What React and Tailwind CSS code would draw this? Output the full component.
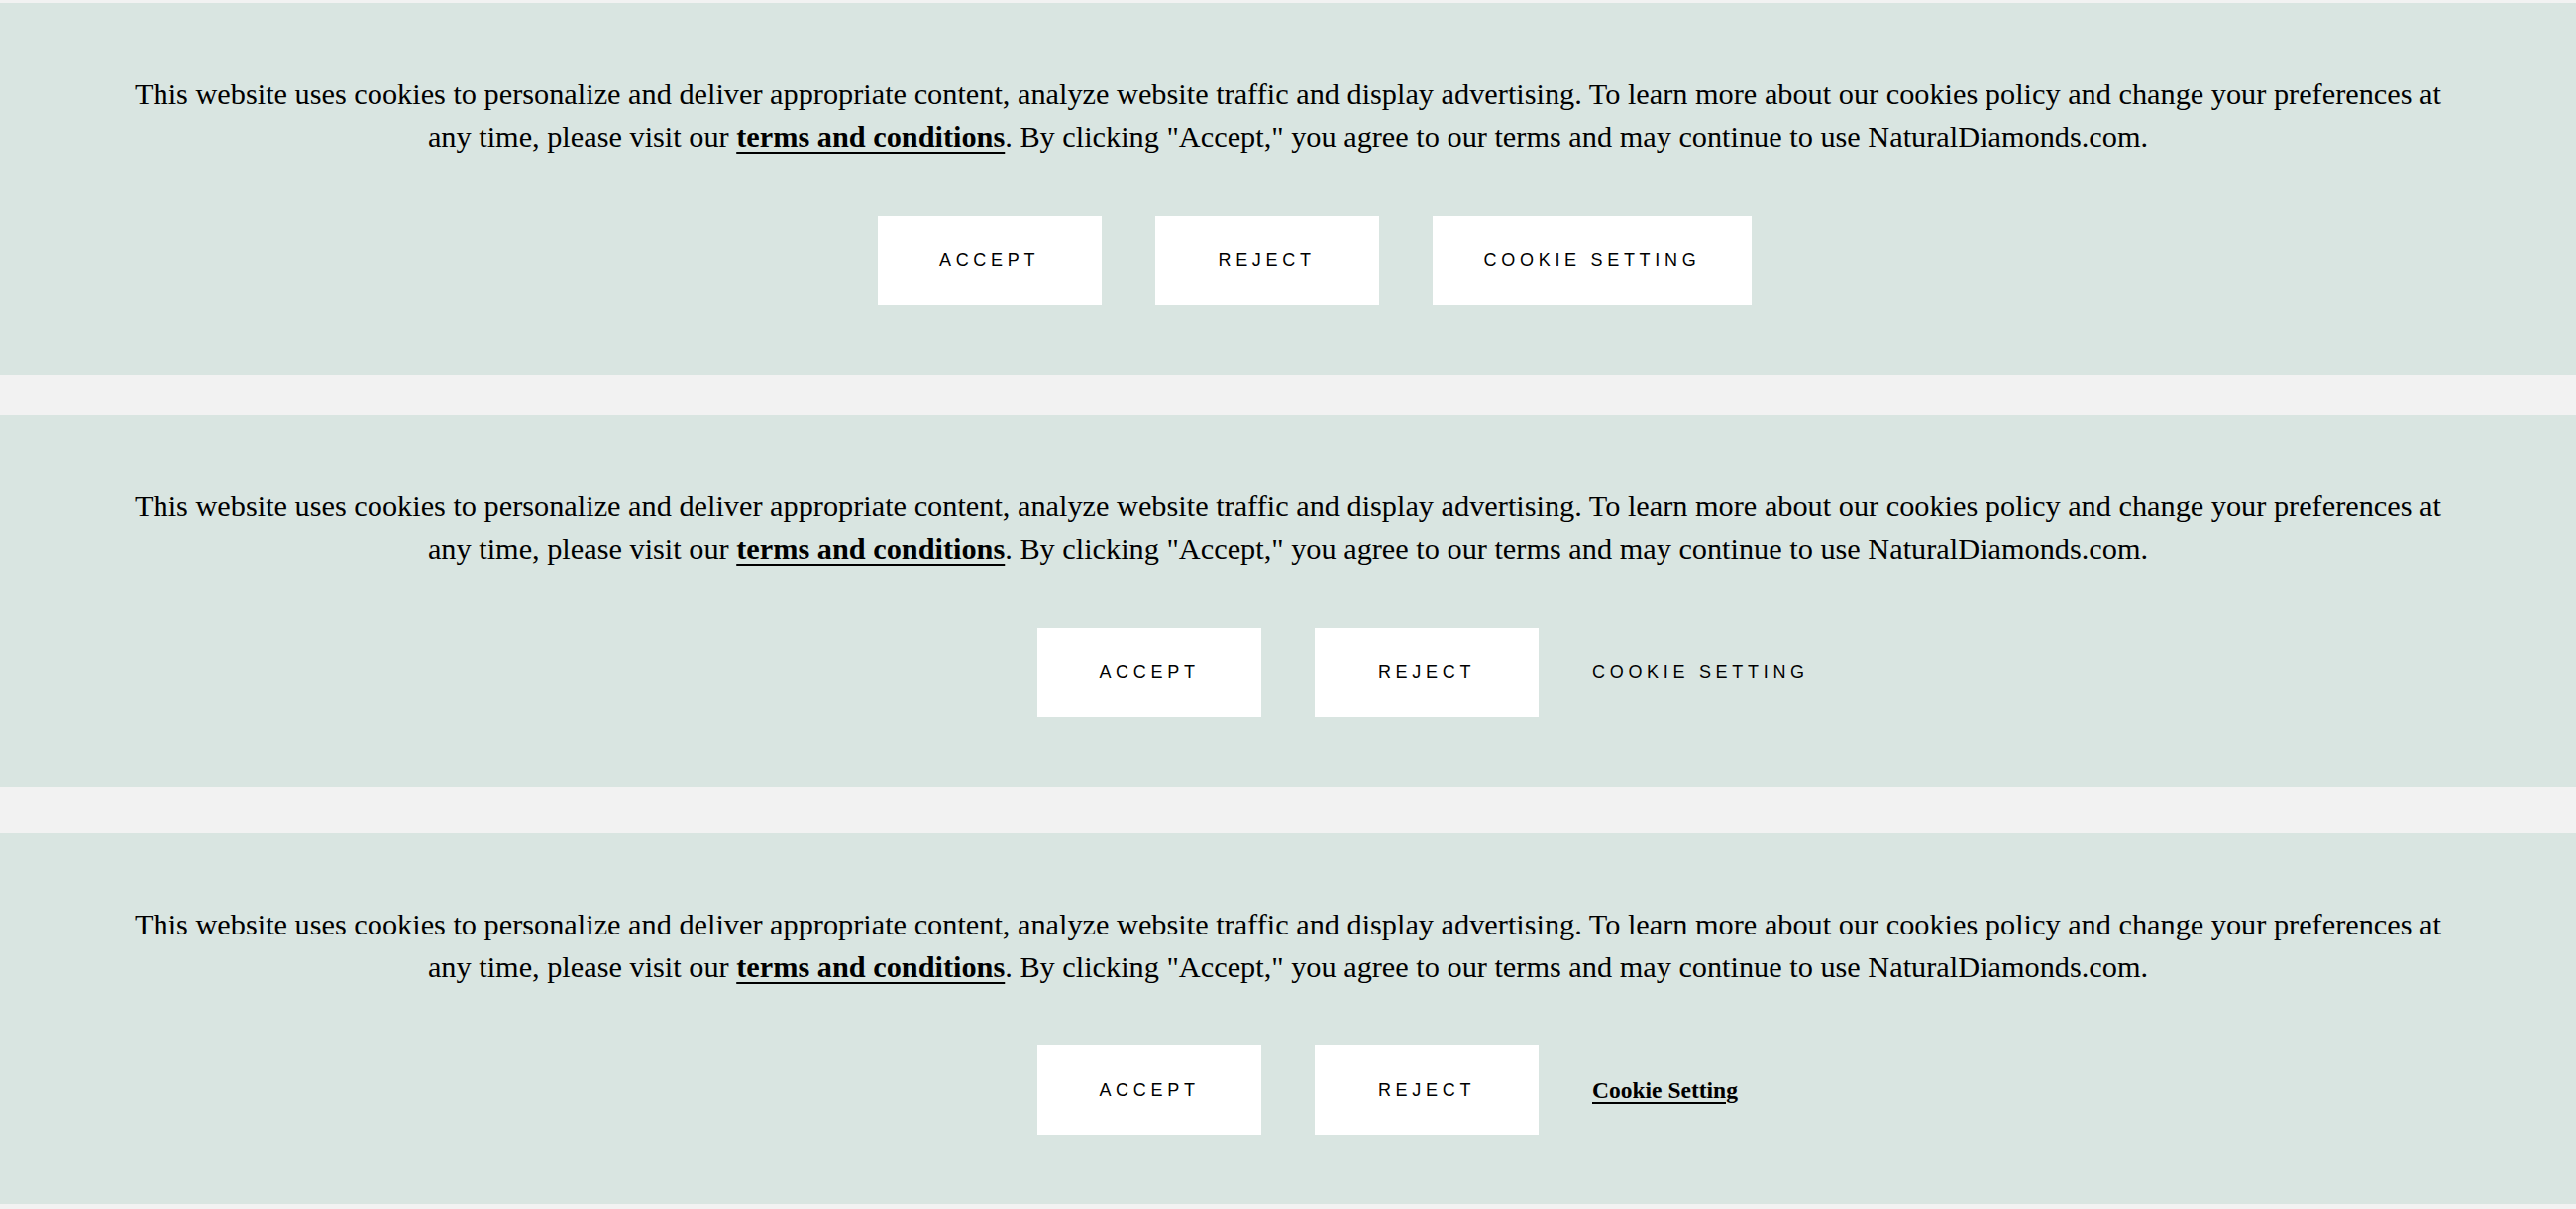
import React from 'react';

const serif = "font-['Liberation_Serif','Times_New_Roman',serif]";
const sans = "font-['Liberation_Sans',Arial,sans-serif]";

const btnCls = `${sans} h-[90px] min-w-[226px] px-[52px] bg-white text-black text-[18px] tracking-[4.7px] uppercase flex items-center justify-center`;

function Message() {
  return (
    <p className={`${serif} px-[122px] text-center text-black text-[30.3px] leading-[43.4px]`}>
      This website uses cookies to personalize and deliver appropriate content, analyze website traffic and display advertising. To learn more about our cookies policy and change your preferences at any time, please visit our{' '}
      <a href="#" className="font-bold underline decoration-2 underline-offset-[5px]">terms and conditions</a>. By clicking "Accept," you agree to our terms and may continue to use NaturalDiamonds.com.
    </p>
  );
}

function Banner({ variant, className }) {
  return (
    <section className={`bg-[#d9e5e1] pt-[71px] pb-[70px] ${className}`}>
      <Message />
      {variant === 'boxed' ? (
        <div className="mt-[57px] flex justify-center">
          <div className="flex gap-[54px] pl-[54px]">
            <button className={btnCls}>Accept</button>
            <button className={btnCls}>Reject</button>
            <button className={btnCls}>Cookie Setting</button>
          </div>
        </div>
      ) : (
        <div className="mt-[57px] grid grid-cols-[1fr_auto_1fr] items-center">
          <div></div>
          <div className="flex gap-[54px]">
            <button className={btnCls}>Accept</button>
            <button className={btnCls}>Reject</button>
          </div>
          <div className="pl-[54px] flex">
            {variant === 'plain' ? (
              <button className={`${sans} text-black text-[18px] tracking-[4.7px] uppercase`}>Cookie Setting</button>
            ) : (
              <button className={`${serif} text-black text-[23.5px] font-bold underline decoration-2 underline-offset-[4px]`}>Cookie Setting</button>
            )}
          </div>
        </div>
      )}
    </section>
  );
}

export default function App() {
  return (
    <div className="min-h-[1220px] bg-[#f2f2f2] pt-[3px]">
      <Banner variant="boxed" />
      <Banner variant="plain" className="mt-[41px]" />
      <Banner variant="link" className="mt-[47px]" />
    </div>
  );
}
